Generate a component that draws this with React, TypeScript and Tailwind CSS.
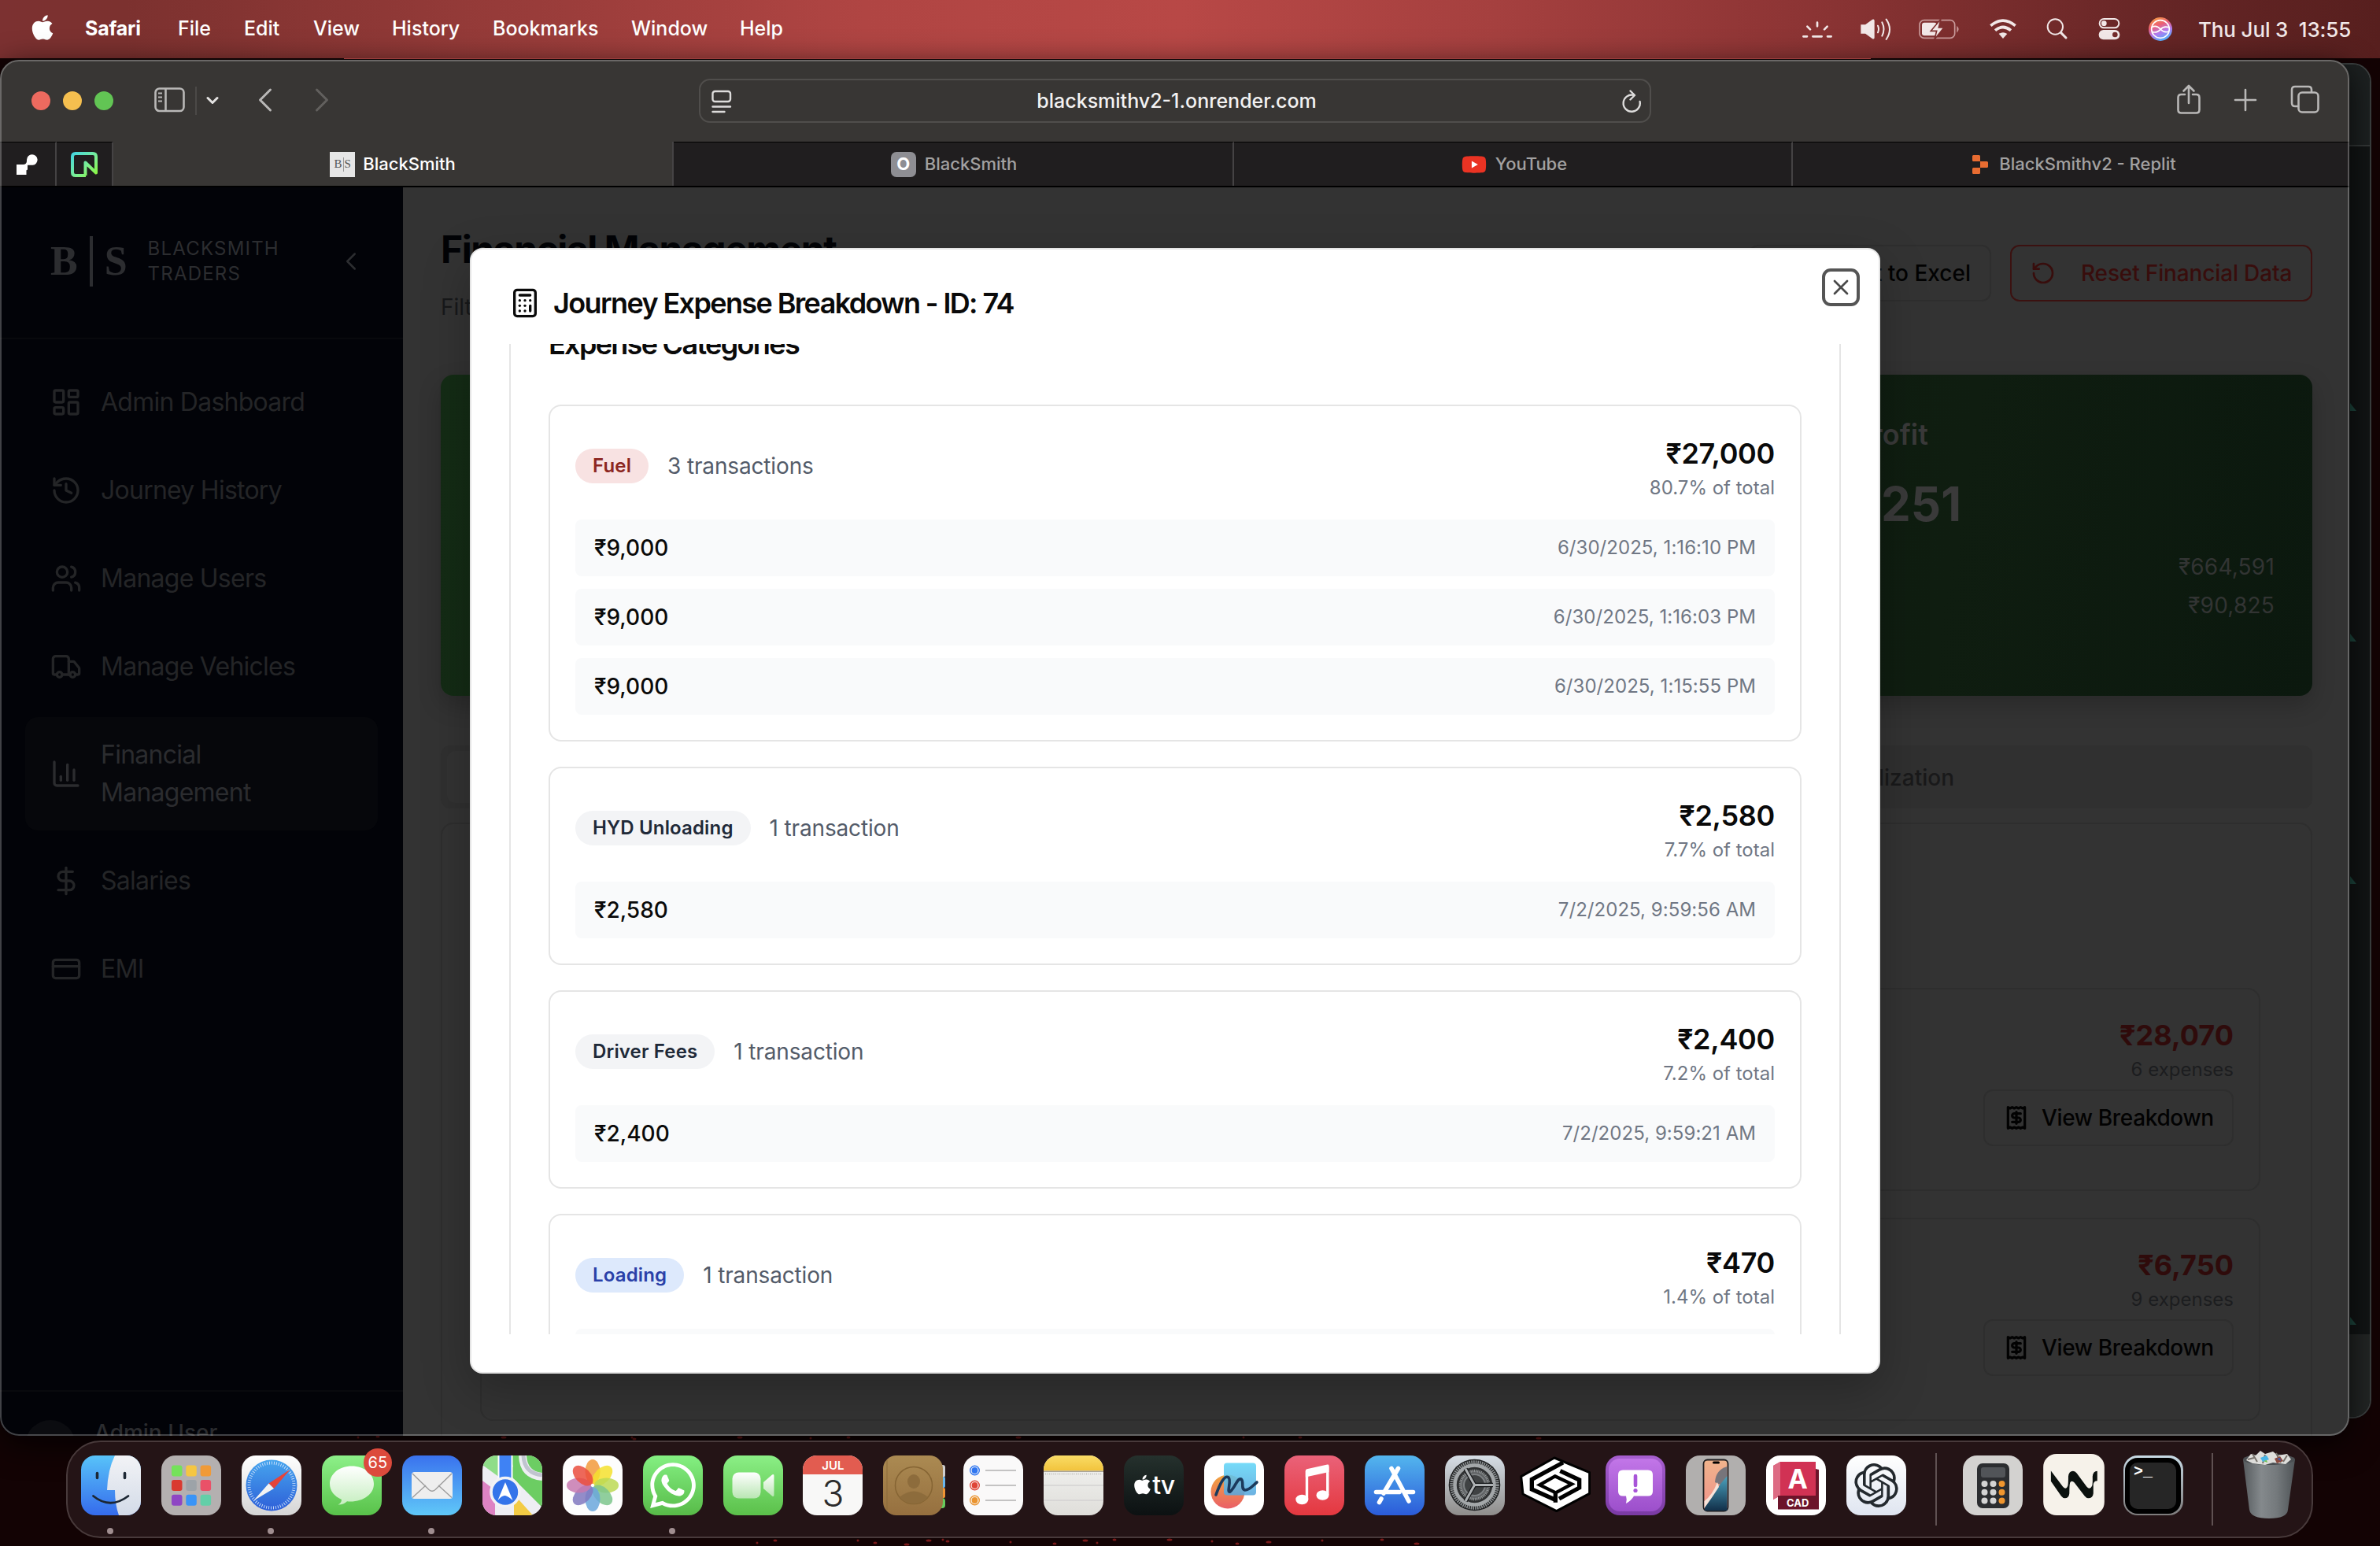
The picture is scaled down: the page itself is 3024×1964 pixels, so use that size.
import React from "react";
import {
  Calculator,
  ChartColumn,
  ChevronLeft,
  CreditCard,
  DollarSign,
  History,
  LayoutDashboard,
  Receipt,
  RotateCcw,
  Truck,
  Users,
  X,
} from "lucide-react";
import { FaApple, FaWhatsapp, FaYoutube } from "react-icons/fa";
import { SiOpenai, SiReplit } from "react-icons/si";

/* ---------- macOS menu bar ---------- */

const menus = [
  { label: "Safari", cls: "w-[118px] font-bold tracking-[-0.2px]" },
  { label: "File", cls: "w-[84px]" },
  { label: "Edit", cls: "w-[88px]" },
  { label: "View", cls: "w-[100px]" },
  { label: "History", cls: "w-[128px]" },
  { label: "Bookmarks", cls: "w-[176px]" },
  { label: "Window", cls: "w-[138px]" },
  { label: "Help", cls: "w-[80px]" },
];

function MenuBar() {
  return (
    <div className="flex h-[74px] items-center bg-[linear-gradient(90deg,#7c3131_0px,#7c312f_160px,#b04543_1100px,#b84846_1500px,#a5403f_1900px,#8e3535_2270px,#642525_2770px,#571f1e_3024px)] pl-[40px] text-[25px] font-medium text-white">
      <FaApple className="h-[36px] w-[28px] -translate-y-[2px]" />
      <div className="flex pl-[40px]">
        {menus.map((m) => (
          <span key={m.label} className={"whitespace-nowrap " + m.cls}>
            {m.label}
          </span>
        ))}
      </div>
      <div className="ml-auto flex items-center text-[#f2e8e8]">
        <svg className="h-[34px] w-[38px]" viewBox="63 60 114 102" fill="none" stroke="currentColor" strokeWidth="8" strokeLinecap="round">
          <path d="M67 139h14M103 139h34M159 139h14M120 86v14M82 101l11 11M158 101l-11 11" />
        </svg>
        <svg className="ml-[36px] h-[34px] w-[40px]" viewBox="284 60 120 102" fill="none" stroke="currentColor" strokeWidth="6" strokeLinecap="round">
          <path fill="currentColor" d="M288 97h15l28-20q3-2 3 2v64q0 4-3 2l-28-20h-15z" />
          <path d="M350 98q6 13 0 26M366 85q13 26 0 52M382 74q26 37 0 76" />
        </svg>
        <svg className="ml-[34px] h-[34px] w-[52px]" viewBox="503 60 156 102">
          <rect x="506" y="77" width="134" height="68" rx="17" fill="none" stroke="#c99a9a" strokeWidth="5" />
          <path d="M648 98q14 13 0 27z" fill="#c99a9a" />
          <rect x="515" y="86" width="56" height="50" rx="9" fill="currentColor" />
          <path d="M587 73l-38 45h22l-8 32 36-45h-20z" fill="currentColor" stroke="#7e3030" strokeWidth="5" />
        </svg>
        <svg className="ml-[37px] h-[34px] w-[36px]" viewBox="768 60 108 102" fill="none" stroke="currentColor" strokeWidth="11">
          <path d="M775 98q47-39 94 0M792 116q30-25 60 0" />
          <path d="M806 129q16-11 32 0l-16 18z" fill="currentColor" stroke="none" />
        </svg>
        <svg className="ml-[37px] h-[34px] w-[28px]" viewBox="990 60 84 102" fill="none" stroke="currentColor" strokeLinecap="round">
          <circle cx="1024" cy="102" r="29" strokeWidth="6" />
          <path d="M1046 125l19 19" strokeWidth="9" />
        </svg>
        <svg className="ml-[38px] h-[34px] w-[28px]" viewBox="1188 60 84 102" fill="none" stroke="currentColor">
          <rect x="1193" y="72" width="74" height="34" rx="17" strokeWidth="6" />
          <circle cx="1210" cy="89" r="10" fill="currentColor" stroke="none" />
          <rect x="1190" y="114" width="80" height="37" rx="18" fill="currentColor" stroke="none" />
          <circle cx="1252" cy="132" r="10" fill="#742a2a" stroke="none" />
        </svg>
        <svg className="ml-[36px] h-[34px] w-[30px]" viewBox="1380 60 90 102">
          <defs>
            <linearGradient id="siri" x1="0.2" y1="0" x2="0.6" y2="1">
              <stop offset="0" stopColor="#f5a040" />
              <stop offset="0.35" stopColor="#ec5f72" />
              <stop offset="0.65" stopColor="#b57af0" />
              <stop offset="1" stopColor="#4fb4ff" />
            </linearGradient>
          </defs>
          <circle cx="1425" cy="111" r="45" fill="url(#siri)" />
          <circle cx="1425" cy="111" r="34" fill="none" stroke="#fff" strokeWidth="5" />
          <path d="M1393 104q16-10 32 7t33 8M1393 122q20 4 32-10t32-8" fill="none" stroke="#fff" strokeWidth="5" />
        </svg>
        <span className="ml-[33px] w-[231px] text-[26px] tracking-[-0.15px] whitespace-pre">Thu Jul 3  13:55</span>
      </div>
    </div>
  );
}

/* ---------- Safari chrome ---------- */

function Toolbar() {
  return (
    <div className="flex h-[104px] shrink-0 items-center bg-[#383634] pl-[40px] text-[#b9b8b7]">
      <div className="flex gap-[16px]">
        <span className="size-[24px] rounded-full bg-[#ed6a5f]" />
        <span className="size-[24px] rounded-full bg-[#f5bf4f]" />
        <span className="size-[24px] rounded-full bg-[#62c554]" />
      </div>
      <svg className="ml-[52px] h-[32px] w-[40px] -translate-y-px" viewBox="0 0 40 32" fill="none" stroke="currentColor" strokeWidth="2.6">
        <rect x="1.5" y="1.5" width="36" height="28.5" rx="5" />
        <path d="M14.5 2v28" />
        <path d="M5 7.5h5M5 12.5h5M5 17.5h5" strokeWidth="2" />
      </svg>
      <div className="ml-[12px] h-[36px] w-[2px] bg-[#4b4947]" />
      <svg className="ml-[12px] h-[12px] w-[16px]" viewBox="0 0 16 12" fill="none" stroke="#e4e3e2" strokeWidth="3" strokeLinecap="round" strokeLinejoin="round">
        <path d="M2 2.5l6 6 6-6" />
      </svg>
      <svg className="ml-[50px] h-[32px] w-[18px] -translate-y-px" viewBox="0 0 18 32" fill="none" stroke="currentColor" strokeWidth="3" strokeLinecap="round" strokeLinejoin="round">
        <path d="M15.5 3L2.5 16l13 13" />
      </svg>
      <svg className="ml-[54px] h-[32px] w-[18px] -translate-y-px" viewBox="0 0 18 32" fill="none" stroke="#62605e" strokeWidth="3" strokeLinecap="round" strokeLinejoin="round">
        <path d="M2.500 3l13 13-13 13" />
      </svg>
      <div className="ml-[470px] flex h-[56px] w-[1210px] items-center rounded-[14px] border-2 border-[#504e4c] pr-[10px] pl-[14px]">
        <svg className="h-[30px] w-[26px] translate-y-px" viewBox="0 0 26 30" fill="none" stroke="#dddcdb" strokeWidth="2.4" strokeLinecap="round">
          <rect x="1.5" y="2" width="22.5" height="13" rx="3" />
          <path d="M1.5 21.5h22.5M1.5 28h15" />
        </svg>
        <span className="flex-1 translate-y-px text-center text-[25px] font-medium text-[#f3f2f2]">blacksmithv2-1.onrender.com</span>
        <svg className="h-[30px] w-[26px] translate-y-px" viewBox="0 0 26 30" fill="none" stroke="#dddcdb" strokeWidth="2.4" strokeLinecap="round" strokeLinejoin="round">
          <path d="M15.5 6.8A10.6 10.6 0 1 0 23.600 15" />
          <path d="M11.5 1.500l5.500 5.500-5.500 5.500" />
        </svg>
      </div>
      <svg className="ml-[666px] h-[38px] w-[34px] -translate-y-[2px]" viewBox="0 0 34 38" fill="none" stroke="currentColor" strokeWidth="2.6" strokeLinecap="round" strokeLinejoin="round">
        <path d="M12 13H7.500q-4 0-4 4v15.500q0 4 4 4h19q4 0 4-4V17q0-4-4-4H22M17 24V2.500M10.500 8.500L17 2l6.500 6.500" />
      </svg>
      <svg className="ml-[40px] h-[30px] w-[30px] -translate-y-px" viewBox="0 0 30 30" fill="none" stroke="currentColor" strokeWidth="2.6" strokeLinecap="round">
        <path d="M15 2v26M2 15h26" />
      </svg>
      <svg className="ml-[42px] h-[38px] w-[38px] -translate-y-px" viewBox="0 0 38 38" fill="none" stroke="currentColor" strokeWidth="2.6" strokeLinejoin="round">
        <rect x="10.500" y="9.500" width="25" height="25" rx="4.500" />
        <path d="M10.500 27H6q-4 0-4-4V6q0-4 4-4h17q4 0 4 4v3.500" />
      </svg>
    </div>
  );
}

function TabBar() {
  return (
    <div className="flex h-[58px] shrink-0 border-b-2 border-black bg-[#201e1f] text-[22px] font-medium text-[#a2a1a1]">
      <div className="flex w-[72px] items-center justify-center border-t border-r-2 border-t-black border-r-[#454344] pr-[2px]">
        <svg className="h-[28px] w-[28px]" viewBox="0 0 28 28" fill="#fff">
          <path d="M1 14h8.500q4 0 4.500-4v-2a6.800 6.800 0 1 1 7.500 6.800H15v5q0 1.500-1.500 1.500V27H1z" />
        </svg>
      </div>
      <div className="flex w-[72px] items-center justify-center border-t border-r-2 border-t-black border-r-[#454344]">
        <svg className="h-[34px] w-[34px]" viewBox="0 0 34 34" fill="none" strokeWidth="4">
          <defs>
            <linearGradient id="neon" x1="0" y1="0" x2="1" y2="1">
              <stop offset="0" stopColor="#45d6e0" />
              <stop offset="0.6" stopColor="#7df08f" />
              <stop offset="1" stopColor="#8cf73e" />
            </linearGradient>
          </defs>
          <path stroke="url(#neon)" strokeLinejoin="round" d="M19 31H6q-4 0-4-4V7q0-4 4-4h22q4 0 4 4v20.500L18.500 14.500V31" />
        </svg>
      </div>
      <div className="flex w-[712px] items-center justify-center border-r-2 border-r-[#454344] bg-[#383634] pt-px text-white">
        <span className="relative flex size-[32px] items-center justify-center bg-[#e6e6e6] font-['Liberation_Serif'] text-[15px] text-[#555]">
          B<span className="mx-[1px] h-[18px] w-px bg-[#999]" />S
        </span>
        <span className="ml-[10px]">BlackSmith</span>
      </div>
      <div className="flex w-[712px] items-center justify-center border-t border-r-2 border-t-black border-r-[#454344] pl-[2px]">
        <span className="flex size-[32px] items-center justify-center rounded-[7px] bg-[#8e8e93] text-[22px] font-bold text-white">O</span>
        <span className="ml-[11px]">BlackSmith</span>
      </div>
      <div className="flex w-[710px] items-center justify-center border-t border-r-2 border-t-black border-r-[#454344] pl-[4px]">
        <span className="relative flex h-[32px] w-[32px] items-center justify-center">
          <span className="absolute size-[14px] bg-white" />
          <FaYoutube className="relative size-[34px] text-[#ea3323]" />
        </span>
        <span className="ml-[11px]">YouTube</span>
      </div>
      <div className="flex flex-1 items-center justify-center border-t border-black pl-[6px]">
        <SiReplit className="size-[24px] text-[#e86c31]" />
        <span className="ml-[12px]">BlackSmithv2 - Replit</span>
      </div>
    </div>
  );
}

/* ---------- Application page (dimmed behind the dialog) ---------- */

const nav = [
  { label: "Admin Dashboard", Icon: LayoutDashboard },
  { label: "Journey History", Icon: History },
  { label: "Manage Users", Icon: Users },
  { label: "Manage Vehicles", Icon: Truck },
  { label: "Financial Management", Icon: ChartColumn, active: true },
  { label: "Salaries", Icon: DollarSign },
  { label: "EMI", Icon: CreditCard },
];

function Sidebar() {
  return (
    <aside className="flex h-full w-[512px] shrink-0 flex-col bg-[#020308]">
      <div className="flex h-[193px] shrink-0 items-center border-b-2 border-[#08090d] pb-[4px] pl-[64px] text-[#2c2d30]">
        <span className="font-['Liberation_Serif'] text-[52px] leading-none font-bold">B</span>
        <span className="ml-[15px] h-[64px] w-[4px] bg-[#2c2d30]" />
        <span className="ml-[15px] font-['Liberation_Serif'] text-[52px] leading-none font-bold">S</span>
        <div className="ml-[26px] w-[250px] text-[24px] leading-[32px] tracking-[1.2px]">
          BLACKSMITH
          <br />
          TRADERS
        </div>
        <ChevronLeft className="-ml-[11px] size-[38px]" strokeWidth={1.6} />
      </div>
      <nav className="flex flex-1 flex-col gap-4 px-8 pt-8">
        {nav.map(({ label, Icon, active }) => (
          <div
            key={label}
            className={
              "flex items-center gap-6 rounded-[16px] px-8 py-6 text-[32px] leading-[48px] tracking-[-0.75px] " +
              (active ? "bg-[#06070b] text-[#2b2c2f]" : "text-[#242527]")
            }
          >
            <Icon className="size-[40px] shrink-0" strokeWidth={2} />
            <span className="w-[290px]">{label}</span>
          </div>
        ))}
      </nav>
      <div className="flex h-[58px] shrink-0 gap-6 overflow-hidden border-t-2 border-[#08090d] px-8 pt-8">
        <span className="mt-1 size-16 shrink-0 rounded-full bg-[#0b0c10]" />
        <span className="text-[28px] leading-[40px] font-medium text-[#2b2c2f]">Admin User</span>
      </div>
    </aside>
  );
}

const journeys = [
  { amount: "₹28,070", count: "6 expenses" },
  { amount: "₹6,750", count: "9 expenses" },
];

function FinancePage() {
  return (
    <main className="flex min-w-0 flex-1 flex-col bg-[#333333] pt-[46px] pr-[47px] pl-[48px]">
      <div className="flex h-[126px] shrink-0 items-center justify-between">
        <div>
          <h1 className="text-[48px] leading-[64px] font-bold tracking-[-1.45px] text-[#020306]">Financial Management</h1>
          <p className="mt-[21px] text-[28px] leading-[40px] text-[#17181a]">Filters applied</p>
        </div>
        <div className="flex gap-[24px]">
          <div className="flex h-[72px] w-[308px] items-center justify-end rounded-[12px] border-2 border-[#2e2e2e] pr-[24px] text-[28px] font-medium text-[#020202]">
            Export to Excel
          </div>
          <div className="flex h-[72px] w-[384px] items-center rounded-[12px] border-2 border-[#3b1110] pl-[24px] text-[28px] font-medium tracking-[-0.15px] whitespace-nowrap text-[#380d0c]">
            <RotateCcw className="size-[32px]" />
            <span className="ml-[32px]">Reset Financial Data</span>
          </div>
        </div>
      </div>

      <section className="mt-[66px] h-[408px] shrink-0 rounded-[16px] bg-[linear-gradient(100deg,#142c15_0%,#0f1f12_60%,#0f1d10_80%,#0b180e_100%)] px-[48px] pt-[48px] text-[#3a3a3a] shadow-[0_12px_30px_rgba(0,0,0,0.2)]">
        <div className="flex h-[56px] items-center pl-[1675px] text-[36px] font-semibold">
          <span className="w-[167px] text-right whitespace-nowrap">Net Profit</span>
        </div>
        <div className="flex h-[116px] items-center pt-[4px] text-[60px] font-bold">
          <span className="w-[1884px] text-right">₹573,251</span>
        </div>
        <div className="flex flex-col items-end text-[28px] leading-[49px] tracking-[0.2px] text-[#323433]">
          <span>₹664,591</span>
          <span>₹90,825</span>
        </div>
      </section>

      <div className="mt-[63px] flex h-[80px] shrink-0 items-center rounded-[12px] bg-[#303030] px-[8px] text-[28px] font-medium text-[#19191a]">
        <span className="h-[66px] w-[760px] rounded-[10px] bg-[#333333]" />
        <span className="w-[1155px] pt-[2px] text-right">Expense Visualization</span>
      </div>

      <section className="mt-[18px] flex h-[900px] shrink-0 flex-col gap-[34px] rounded-[16px] border-2 border-[#2e2e2e] pt-[208px] pr-[64px] pl-[48px]">
        {journeys.map((j) => (
          <div key={j.amount} className="flex h-[258px] shrink-0 flex-col items-end rounded-[16px] border-2 border-[#2e2e2e] px-8 pt-[30px]">
            <div className="text-[36px] leading-[56px] font-bold text-[#2f0b0b]">{j.amount}</div>
            <div className="text-[24px] leading-[32px] text-[#1c1d1f]">{j.count}</div>
            <div className="mt-[9px] flex h-[72px] w-[318px] shrink-0 items-center rounded-[12px] border-2 border-[#2e2e2e] pl-[24px] text-[28px] font-medium tracking-[-0.35px] whitespace-nowrap text-[#020202]">
              <Receipt className="size-[32px]" strokeWidth={2.4} />
              <span className="ml-[16px]">View Breakdown</span>
            </div>
          </div>
        ))}
      </section>
    </main>
  );
}

/* ---------- Dialog ---------- */

type Category = {
  name: string;
  badge: string;
  count: string;
  amount: string;
  share: string;
  rows: { amount: string; date: string }[];
};

const categories: Category[] = [
  {
    name: "Fuel",
    badge: "bg-[#f8e2e2] text-[#8c2620]",
    count: "3 transactions",
    amount: "₹27,000",
    share: "80.7% of total",
    rows: [
      { amount: "₹9,000", date: "6/30/2025, 1:16:10 PM" },
      { amount: "₹9,000", date: "6/30/2025, 1:16:03 PM" },
      { amount: "₹9,000", date: "6/30/2025, 1:15:55 PM" },
    ],
  },
  {
    name: "HYD Unloading",
    badge: "bg-[#f3f4f6] text-[#202938]",
    count: "1 transaction",
    amount: "₹2,580",
    share: "7.7% of total",
    rows: [{ amount: "₹2,580", date: "7/2/2025, 9:59:56 AM" }],
  },
  {
    name: "Driver Fees",
    badge: "bg-[#f3f4f6] text-[#202938]",
    count: "1 transaction",
    amount: "₹2,400",
    share: "7.2% of total",
    rows: [{ amount: "₹2,400", date: "7/2/2025, 9:59:21 AM" }],
  },
  {
    name: "Loading",
    badge: "bg-[#dde9fc] text-[#2a40a8]",
    count: "1 transaction",
    amount: "₹470",
    share: "1.4% of total",
    rows: [{ amount: "₹470", date: "7/2/2025, 9:58:47 AM" }],
  },
];

function CategoryCard({ c }: { c: Category }) {
  return (
    <div className="rounded-[16px] border-2 border-[#e5e5e5] p-8">
      <div className="flex h-[88px] items-center justify-between">
        <div className="flex items-center gap-6">
          <span className={"flex h-[44px] items-center rounded-full px-[22px] text-[24px] font-semibold tracking-[0.15px] " + c.badge}>{c.name}</span>
          <span className="text-[28px] tracking-[-0.15px] text-[#535b69]">{c.count}</span>
        </div>
        <div className="text-right">
          <div className="-mt-px text-[36px] leading-[56px] font-semibold tracking-[-0.3px] text-[#0a0a0a]">{c.amount}</div>
          <div className="text-[24px] leading-[32px] text-[#707784]">{c.share}</div>
        </div>
      </div>
      <div className="mt-6 flex flex-col gap-4">
        {c.rows.map((r) => (
          <div key={r.date} className="flex h-[72px] items-center justify-between rounded-[8px] bg-[#f9fafb] px-6">
            <span className="text-[28px] font-medium text-[#0a0a0a]">{r.amount}</span>
            <span className="text-[24px] tracking-[0.05px] text-[#707784]">{r.date}</span>
          </div>
        ))}
      </div>
    </div>
  );
}

function BreakdownDialog() {
  return (
    <div className="absolute top-[239px] left-[597px] flex h-[1430px] w-[1792px] flex-col rounded-[16px] border-2 border-[#e5e5e5] bg-white p-[48px] shadow-[0_20px_60px_rgba(0,0,0,0.25)]">
      <div className="flex h-[40px] shrink-0 items-center gap-4 text-[#0a0a0a]">
        <Calculator className="size-[40px]" />
        <h2 className="text-[36px] leading-none font-semibold tracking-[-1.62px] whitespace-nowrap">Journey Expense Breakdown - ID: 74</h2>
      </div>
      <div className="mt-8 min-h-0 flex-1 overflow-hidden">
        <div className="-mt-[18px] h-[1600px] border-x-2 border-[#e5e5e5] px-[48px]">
          <h3 className="text-[36px] leading-[36px] font-semibold tracking-[-1.7px] text-[#0a0a0a]">Expense Categories</h3>
          <div className="mt-[59px] flex flex-col gap-8">
            {categories.map((c) => (
              <CategoryCard key={c.name} c={c} />
            ))}
          </div>
        </div>
      </div>
      <div className="absolute top-[24px] right-[24px] flex size-[48px] items-center justify-center rounded-[11px] border-4 border-[#555555] text-[#4a4a4a]">
        <X className="size-[32px]" strokeWidth={2} />
      </div>
    </div>
  );
}

/* ---------- Dock ---------- */

function Tile({ children }: { children: React.ReactNode }) {
  return (
    <svg className="size-[76px] overflow-hidden rounded-[18px]" viewBox="0 0 76 76">
      {children}
    </svg>
  );
}

function Grad({ id, a, b }: { id: string; a: string; b: string }) {
  return (
    <defs>
      <linearGradient id={id} x1="0" y1="0" x2="0" y2="1">
        <stop offset="0" stopColor={a} />
        <stop offset="1" stopColor={b} />
      </linearGradient>
    </defs>
  );
}

const Finder = () => (
  <Tile>
    <Grad id="fi" a="#58c3f9" b="#356bec" />
    <Grad id="fi2" a="#f2f3f6" b="#d3dbe8" />
    <rect width="76" height="76" fill="url(#fi)" />
    <path d="M43 0Q34 18 33 44H43Q43 62 48 76H76V0Z" fill="url(#fi2)" />
    <path d="M20.500 22.500v6M55.500 22.500v6" stroke="#1c2733" strokeWidth="3.600" strokeLinecap="round" />
    <path d="M15.500 51.500Q37 69 60 51.500" fill="none" stroke="#1c2733" strokeWidth="2.800" strokeLinecap="round" />
  </Tile>
);

const padColors = ["#74e25a", "#f5c642", "#f09a37", "#d93a30", "#9da3a8", "#ea5168", "#8e46c4", "#3a94f7", "#62cfa8"];
const Launchpad = () => (
  <Tile>
    <rect width="76" height="76" fill="#b4b0b0" />
    {padColors.map((c, i) => (
      <rect key={c} x={13 + (i % 3) * 18.3} y={12.500 + Math.floor(i / 3) * 18.6} width="13.500" height="14" rx="3" fill={c} />
    ))}
  </Tile>
);

const SafariIcon = () => (
  <Tile>
    <Grad id="sa" a="#46a5ee" b="#2e5fd8" />
    <Grad id="sa2" a="#ffffff" b="#d5d5d5" />
    <rect width="76" height="76" fill="url(#sa2)" />
    <circle cx="38" cy="38" r="32.500" fill="url(#sa)" />
    <circle cx="38" cy="38" r="28.500" fill="none" stroke="#cfe3fb" strokeWidth="4" strokeDasharray="0.9 2.080" />
    <path d="M62 17.500L34.500 35.500L41 42Z" fill="#e5443a" />
    <path d="M15 57.500L34.500 35.500L41 42Z" fill="#f3f3f3" />
  </Tile>
);

const Messages = () => (
  <Tile>
    <Grad id="ms" a="#8df089" b="#59c24a" />
    <Grad id="ms2" a="#ffffff" b="#c6eec0" />
    <rect width="76" height="76" fill="url(#ms)" />
    <path d="M38 13.500C22 13.500 10 23.500 10 36C10 45 16 52 25 56Q25 60 20.500 62.500Q28 62.500 32 58.300C51 60 66 50 66 36C66 23.500 54 13.500 38 13.500Z" fill="url(#ms2)" />
  </Tile>
);

const Mail = () => (
  <Tile>
    <Grad id="ml" a="#3a72ee" b="#60c8f8" />
    <rect width="76" height="76" fill="url(#ml)" />
    <rect x="12" y="21" width="52" height="34" rx="3.500" fill="#eeeeee" />
    <path d="M13 53.500L30 38M63 53.500L46 38M13 23L34 43.500Q38 47 42 43.500L63 23" fill="none" stroke="#9c9c9c" strokeWidth="1.400" />
  </Tile>
);

const Maps = () => (
  <Tile>
    <rect width="76" height="76" fill="#eeeef3" />
    <path d="M0 0H22V28L0 12Z" fill="#8fdd88" />
    <path d="M36 0H76V60L40 22Z" fill="#6ccd63" />
    <path d="M51 0Q52 25 76 27" fill="none" stroke="#eeeef3" strokeWidth="10" />
    <path d="M52 0Q53 23 76 25" fill="none" stroke="#c0c4cf" strokeWidth="5" />
    <path d="M0 32L16 44V76H0Z" fill="#dd83c3" />
    <path d="M40 76V62L46 56L64 76Z" fill="#f3cb45" />
    <path d="M38 28L76 66V52L38 14Z" fill="#6ccd63" />
    <path d="M20.500 -2H37.500V50H20.500Z" fill="#3f82f4" stroke="#fff" strokeWidth="2" />
    <circle cx="29" cy="46.500" r="18" fill="#3474ea" stroke="#f2f2f5" strokeWidth="3.600" />
    <path d="M29 34L38.500 57Q33 52 29 51T19.500 57Z" fill="#fff" />
  </Tile>
);

const petals = ["#f29a3c", "#f5e02e", "#bcd954", "#7dc58c", "#6ba7dc", "#8078c0", "#c779b0", "#ea4d3d"];
const Photos = () => (
  <Tile>
    <rect width="76" height="76" fill="#fdfdfd" />
    {petals.map((c, i) => (
      <ellipse key={c} cx="38" cy="20.500" rx="9.500" ry="15.500" fill={c} fillOpacity="0.85" transform={"rotate(" + i * 45 + " 38 38)"} />
    ))}
  </Tile>
);

const WhatsApp = () => (
  <div className="flex size-[76px] items-center justify-center rounded-[18px] bg-gradient-to-b from-[#84f082] to-[#58bb48]">
    <FaWhatsapp className="size-[66px] text-white" />
  </div>
);

const FaceTime = () => (
  <Tile>
    <Grad id="ft" a="#8bef86" b="#5bc04a" />
    <Grad id="ft2" a="#ffffff" b="#b9e6b3" />
    <rect width="76" height="76" fill="url(#ft)" />
    <rect x="11.500" y="21.500" width="36" height="33" rx="8" fill="url(#ft2)" />
    <path d="M51 34L62 24.500Q64.500 23 64.500 26V50Q64.500 53 62 51.500L51 42Z" fill="url(#ft2)" />
  </Tile>
);

const CalendarIcon = () => (
  <div className="flex size-[76px] flex-col items-center overflow-hidden rounded-[18px] bg-[#f8f8f7]">
    <div className="flex h-[24px] w-full items-center justify-center bg-[#e25c50] pt-[2px] text-[15px] font-semibold text-white">JUL</div>
    <div className="text-[46px] leading-[48px] font-light text-[#2b2b2b]">3</div>
  </div>
);

const Contacts = () => (
  <svg className="w-[80px] shrink-0 translate-x-[2px]" viewBox="0 0 80 76">
    <Grad id="co" a="#ab8a52" b="#96703f" />
    <rect x="64" y="12" width="15" height="16" rx="3" fill="#cfcfcf" />
    <rect x="64" y="27" width="15" height="14" rx="2" fill="#68b7ee" />
    <rect x="64" y="41" width="15" height="13" rx="2" fill="#ef9434" />
    <rect x="64" y="54" width="15" height="13" rx="4" fill="#67cc5c" />
    <rect width="76" height="76" rx="17" fill="url(#co)" />
    <circle cx="39" cy="38" r="23.500" fill="none" stroke="#856433" strokeWidth="1.500" />
    <ellipse cx="39" cy="33" rx="8" ry="9" fill="#8d6c3c" />
    <path d="M21 53Q39 38 57 53Q50 61.500 39 61.500T21 53Z" fill="#8d6c3c" />
    <path d="M5 6V70" stroke="#8a6a3a" strokeWidth="1" />
  </svg>
);

const Reminders = () => (
  <Tile>
    <rect width="76" height="76" fill="#faf9f9" />
    {["#2f76f0", "#df4538", "#ea9430"].map((c, i) => (
      <g key={c}>
        <circle cx="14.500" cy={19 + i * 19} r="5.800" fill="none" stroke={c} strokeWidth="1.400" />
        <circle cx="14.500" cy={19 + i * 19} r="3.900" fill={c} />
        <path d={"M28 " + (19 + i * 19) + "h39"} stroke="#c4c3c3" strokeWidth="1.800" />
      </g>
    ))}
  </Tile>
);

const Notes = () => (
  <Tile>
    <Grad id="no" a="#f9dc66" b="#f2c33c" />
    <Grad id="no2" a="#f3f3f1" b="#dfdeda" />
    <rect width="76" height="76" fill="url(#no2)" />
    <rect width="76" height="19.500" fill="url(#no)" />
    <path d="M0 20.200h76" stroke="#a8a296" strokeWidth="1.400" />
    <path d="M2 23.500h72" stroke="#b5b3ad" strokeWidth="1.500" strokeDasharray="1 1.600" />
    <path d="M0 38h76M0 57h76" stroke="#d3d2d2" strokeWidth="1.600" />
  </Tile>
);

const AppleTV = () => (
  <div className="flex size-[76px] items-center justify-center rounded-[18px] bg-gradient-to-b from-[#25312d] to-[#0c1112] text-white">
    <FaApple className="h-[28px] w-[23px] -translate-y-[1px]" />
    <span className="ml-px text-[32px] leading-none font-medium tracking-[-1px]">tv</span>
  </div>
);

const Freeform = () => (
  <Tile>
    <Grad id="ff" a="#f1a53f" b="#ea5f67" />
    <Grad id="ff2" a="#63d6f8" b="#58a7dd" />
    <rect width="76" height="76" fill="#ffffff" />
    <circle cx="30" cy="46" r="21.500" fill="url(#ff)" />
    <rect x="25" y="9.500" width="41" height="41" rx="4" fill="url(#ff2)" fillOpacity="0.88" />
    <path d="M15 50C20 36 26 24 31 28C35 32 28 48 33 46C40 40 42 28 47 30C51 33 46 43 52 44C58 44 62 38 67 34" fill="none" stroke="#1b3a5c" strokeWidth="3.600" strokeLinecap="round" />
  </Tile>
);

const MusicIcon = () => (
  <Tile>
    <Grad id="mu" a="#ea6279" b="#e4383f" />
    <rect width="76" height="76" fill="url(#mu)" />
    <path d="M54.800 14V50M28.500 56V20" fill="none" stroke="#fff" strokeWidth="3.400" />
    <path d="M26.800 19.500Q26.800 17.600 28.500 17.200L54.500 11.600Q56.500 11.300 56.500 13V21L26.800 27.500Z" fill="#fff" />
    <ellipse cx="22.300" cy="56" rx="8" ry="6.200" fill="#fff" />
    <ellipse cx="48.500" cy="50.500" rx="8" ry="6.200" fill="#fff" />
  </Tile>
);

const AppStore = () => (
  <Tile>
    <Grad id="as" a="#53b6ee" b="#2b5bd9" />
    <rect width="76" height="76" fill="url(#as)" />
    <path d="M34 16.500L56 58M42.500 16.500L24 48M14.500 46.500H44M53 46.500H61.500M21 55L18.500 59.500" fill="none" stroke="#fff" strokeWidth="5.600" strokeLinecap="round" />
  </Tile>
);

const Settings = () => (
  <Tile>
    <Grad id="se" a="#d6dee6" b="#8f8d8b" />
    <rect width="76" height="76" fill="url(#se)" />
    <circle cx="37.500" cy="37.500" r="32.800" fill="#1f2122" />
    <circle cx="37.500" cy="37.500" r="29" fill="none" stroke="#8d9193" strokeWidth="4.500" strokeDasharray="1.600 1.100" />
    <circle cx="37.500" cy="37.500" r="25" fill="#2f3132" stroke="#a3a7a9" strokeWidth="4.500" />
    <circle cx="37.500" cy="37.500" r="18" fill="#5d6062" stroke="#8e9293" strokeWidth="3.500" strokeDasharray="1.300 0.900" />
    <circle cx="37.500" cy="37.500" r="13.500" fill="#3f4243" stroke="#7d8183" strokeWidth="2" />
    <path d="M37.500 37.500H61M37.500 37.500L26 17M37.500 37.500L26 58" stroke="#16181a" strokeWidth="5.500" />
    <path d="M37.500 37.500H61M37.500 37.500L26 17M37.500 37.500L26 58" stroke="#adb1b3" strokeWidth="3" />
  </Tile>
);

const HexLogo = () => (
  <svg className="h-[71px] w-[90px] shrink-0 translate-y-[1px]" viewBox="330 48 270 213">
    <path d="M462 54L596 110V190L470 257L342 192L335 125Z" fill="#fff" stroke="#000" strokeWidth="9" strokeLinejoin="round" />
    <path d="M495 72L376 136V174L470 216M484 104L557 138V168L480 210M466 188V224" fill="none" stroke="#000" strokeWidth="16" />
    <path d="M464 124L528 154L467 187L406 157Z" fill="#fff" stroke="#000" strokeWidth="13" />
  </svg>
);

const Feedback = () => (
  <Tile>
    <Grad id="fb" a="#a75fd0" b="#7a3aa4" />
    <Grad id="fb2" a="#c276e8" b="#9c4fcb" />
    <rect width="76" height="76" fill="url(#fb)" />
    <rect x="4" y="4" width="68" height="67" rx="14" fill="url(#fb2)" />
    <path d="M22 18.500H54Q60 18.500 60 24.500V45.500Q60 51.500 54 51.500H36Q33 57 26 61Q27.500 56 26 51.500H22Q16 51.500 16 45.500V24.500Q16 18.500 22 18.500Z" fill="#fff" />
    <path d="M38 26V38" stroke="#a855d8" strokeWidth="4.600" strokeLinecap="round" />
    <circle cx="38" cy="44.500" r="2.600" fill="#a855d8" />
  </Tile>
);

const PhoneMirror = () => (
  <Tile>
    <Grad id="ph" a="#f0b48c" b="#f0918a" />
    <Grad id="ph2" a="#4ba3bf" b="#12304a" />
    <rect width="76" height="76" fill="#b1afae" />
    <rect x="22.500" y="5.500" width="31" height="65" rx="5" fill="url(#ph)" stroke="#1d1d1f" strokeWidth="1.800" />
    <path d="M52.500 14Q38 18 37 34L46 38L52.500 30Z" fill="#77757b" />
    <path d="M52.500 26Q34 48 24 62V70H52.500Z" fill="url(#ph2)" />
    <path d="M40 34Q34 50 23.500 58V67Q33 54 42 40Z" fill="#f6e3da" />
    <rect x="34" y="7.500" width="9" height="3" rx="1.500" fill="#000" />
  </Tile>
);

const AutoCad = () => (
  <div className="relative size-[76px] overflow-hidden rounded-[18px] bg-white">
    <svg className="absolute inset-0 size-[76px]" viewBox="0 0 76 76">
      <path d="M9 13L18 8H63V51H18L9 56Z" fill="#d13254" />
      <path d="M9 13L18 8V51L9 56Z" fill="#dd6b84" />
      <path d="M63 17L67 18V68.500H15V51H63Z" fill="#6c142a" />
    </svg>
    <div className="relative flex flex-col items-center pl-[5px] text-white">
      <span className="mt-[13px] text-[34px] leading-[34px] font-bold">A</span>
      <span className="mt-[6px] text-[13px] leading-[14px] font-bold">CAD</span>
    </div>
  </div>
);

const ChatGpt = () => (
  <div className="flex size-[76px] items-center justify-center rounded-[18px] bg-gradient-to-b from-white to-[#dfe5f0]">
    <SiOpenai className="size-[56px] text-[#23292e]" />
  </div>
);

const CalculatorIcon = () => (
  <Tile>
    <rect width="76" height="76" fill="#d3d2d0" />
    <rect x="18" y="10" width="41" height="57" rx="7" fill="#2b2d30" />
    <rect x="23" y="15" width="31" height="13" rx="3" fill="#515458" />
    {[0, 1, 2].map((r) =>
      [0, 1, 2].map((c) => (
        <circle key={r + "-" + c} cx={27.500 + c * 11} cy={36 + r * 10.800} r="4" fill={c === 2 ? "#f0962e" : "#d3d3d3"} />
      ))
    )}
  </Tile>
);

const WaveIcon = () => (
  <svg className="-mt-[2px] size-[78px] overflow-hidden rounded-[17px]" viewBox="43 36 232 233">
    <rect x="43" y="36" width="232" height="233" fill="#f6f2ea" />
    <path
      d="M72 100L117 160Q130 174 136 158Q138 150 138 122Q140 101 156 101Q164 101 170 109L208 161Q220 174 228 158Q231 150 230 122Q232 101 248 101V138Q234 138 233 152V186Q231 204 214 204Q206 204 200 196L161 145Q152 135 145 144Q142 150 142 186Q140 204 125 204Q117 204 111 196L72 140Z"
      fill="#0b110e"
    />
  </svg>
);

const TerminalIcon = () => (
  <div className="flex size-[76px] items-center justify-center rounded-[18px] bg-gradient-to-b from-[#c8dbe6] to-[#7d7b7b]">
    <div className="size-[71px] rounded-[16px] border-[6px] border-black bg-[#262626] pt-[2px] pl-[5px] font-['Liberation_Mono'] text-[20px] leading-[20px] font-bold text-white">
      &gt;_
    </div>
  </div>
);

const Trash = () => (
  <svg className="h-[90px] w-[70px] -translate-y-[9px]" viewBox="0 0 70 90">
    <defs>
      <linearGradient id="tr" x1="0" y1="0" x2="1" y2="0">
        <stop offset="0" stopColor="#565b5e" />
        <stop offset="0.35" stopColor="#84898c" />
        <stop offset="0.65" stopColor="#74797c" />
        <stop offset="1" stopColor="#505558" />
      </linearGradient>
    </defs>
    <path d="M2 14L10 78Q12 89 35 89T59 78L68 14Z" fill="url(#tr)" />
    <ellipse cx="35" cy="14" rx="33" ry="7" fill="#4b4f52" />
    <path d="M6 15L12 7L18 9L24 3L30 7L40 4L46 9L58 7L63 14L56 20L40 18L30 21L14 19Z" fill="#dededb" />
    <path d="M14 7L20 17M30 8L27 19M44 6L50 18M58 9L53 17M8 14L16 12" stroke="#77726c" strokeWidth="2" />
    <path d="M24 12l8-3 3 5-8 3z" fill="#49b5e6" />
    <path d="M28 16l4-1 1 3z" fill="#6cc24a" />
    <path d="M42 13l7-3 4 6-8 3z" fill="#8a4a3e" />
    <path d="M45 13l4-1 1 4z" fill="#3c5fb0" />
  </svg>
);

const dockApps: { C: React.FC; dot?: boolean; badge?: string }[] = [
  { C: Finder, dot: true },
  { C: Launchpad },
  { C: SafariIcon, dot: true },
  { C: Messages, badge: "65" },
  { C: Mail, dot: true },
  { C: Maps },
  { C: Photos },
  { C: WhatsApp, dot: true },
  { C: FaceTime },
  { C: CalendarIcon },
  { C: Contacts },
  { C: Reminders },
  { C: Notes },
  { C: AppleTV },
  { C: Freeform },
  { C: MusicIcon },
  { C: AppStore },
  { C: Settings },
  { C: HexLogo },
  { C: Feedback },
  { C: PhoneMirror },
  { C: AutoCad },
  { C: ChatGpt },
];

function Dock() {
  return (
    <div className="absolute top-[1830px] left-[84px] flex h-[124px] w-[2855px] rounded-[44px] border-2 border-[#483a3b] bg-[#241416] pt-[17px] pl-[17px]">
      {dockApps.map(({ C, dot, badge }, i) => (
        <div key={i} className="relative flex h-[76px] w-[101.95px] shrink-0">
          <div className="flex w-[76px] shrink-0 justify-center">
            <C />
          </div>
          {badge && (
            <span className="absolute -top-[9px] left-[53px] flex size-[36px] items-center justify-center rounded-full bg-[#dc4a3c] text-[20px] text-white">
              {badge}
            </span>
          )}
          {dot && <span className="absolute top-[92px] left-[33px] size-[8px] rounded-full bg-[#a08e90]" />}
        </div>
      ))}
      <div className="-mt-[3px] ml-[11px] h-[92px] w-[2px] shrink-0 bg-[#5f5152]" />
      <div className="ml-[33px] flex shrink-0 gap-[26px]">
        <CalculatorIcon />
        <div className="w-[76px]">
          <WaveIcon />
        </div>
        <TerminalIcon />
      </div>
      <div className="-mt-[3px] ml-[36px] h-[92px] w-[2px] shrink-0 bg-[#5f5152]" />
      <div className="ml-[36px] shrink-0">
        <Trash />
      </div>
    </div>
  );
}

/* ---------- Desktop ---------- */

const specks = [
  [1090, 1957], [1112, 1960], [1180, 1957], [1198, 1956], [1204, 1958], [1152, 1962], [1284, 1959], [1340, 1961],
  [1379, 1957], [1394, 1960], [1416, 1956], [1486, 1956], [1540, 1958], [1572, 1961], [1612, 1959], [1680, 1957],
  [1756, 1956], [1800, 1961], [455, 1826], [480, 1825], [640, 1826], [803, 1826], [806, 1828], [940, 1826],
  [1030, 1827], [1078, 1826], [1294, 1826], [1580, 1826], [1652, 1826], [1955, 1827], [962, 1960], [985, 1957],
];

function BackWindow() {
  return (
    <div className="absolute top-[80px] left-[2500px] flex h-[1722px] w-[513px] flex-col overflow-hidden rounded-[24px] border-2 border-[#3c4040] bg-[#121515]">
      <div className="h-[104px] shrink-0 border-b-2 border-[#343838] bg-[#1d2121]" />
      <div className="flex-1" />
      <div className="h-[105px] shrink-0 bg-[#232625]" />
      {[430, 723, 1031, 1591].map((y) => (
        <svg key={y} className="absolute left-[484px] h-[10px] w-[8px]" style={{ top: y }} viewBox="0 0 8 10">
          <path d="M0 0L8 10H0Z" fill="#1f4a40" />
        </svg>
      ))}
    </div>
  );
}

export default function App() {
  return (
    <div className="relative h-[1964px] w-[3024px] overflow-hidden bg-[#130304] font-['Inter',sans-serif]">
      <MenuBar />
      <div className="ml-[437px] h-[1px] w-[1940px] bg-[#c9504e]" />
      <svg className="absolute inset-0 h-[1964px] w-[3024px]" viewBox="0 0 3024 1964">
        {specks.map(([x, y], i) => (
          <ellipse key={i} cx={x} cy={y} rx={1.5 + (i % 3)} ry="1.600" fill="#7a1a1a" />
        ))}
      </svg>
      <BackWindow />
      <div className="absolute top-[76px] left-0 flex h-[1748px] w-[2985px] flex-col overflow-hidden rounded-[24px] bg-[#333333] shadow-[0_10px_40px_rgba(0,0,0,0.8)]">
        <Toolbar />
        <TabBar />
        <div className="flex min-h-0 flex-1 overflow-hidden">
          <Sidebar />
          <FinancePage />
        </div>
        <BreakdownDialog />
        <div className="pointer-events-none absolute inset-0 rounded-[24px] border-2 border-white/25" />
      </div>
      <Dock />
    </div>
  );
}
